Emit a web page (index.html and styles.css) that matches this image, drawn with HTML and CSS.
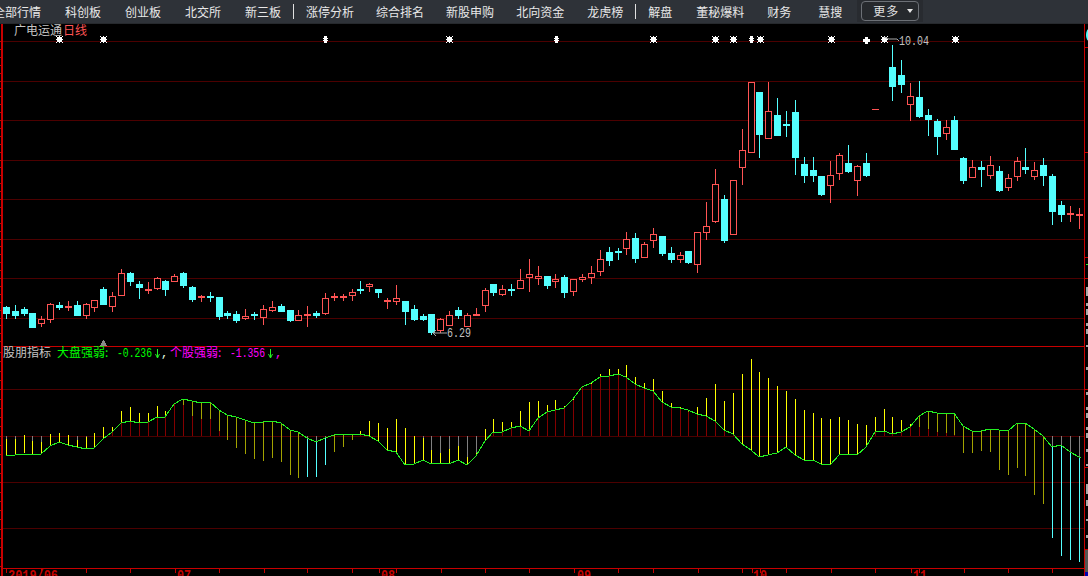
FILE: index.html
```html
<!DOCTYPE html>
<html lang="zh-CN">
<head>
<meta charset="utf-8">
<title>广电运通 日线</title>
<link rel="stylesheet" href="styles.css">
</head>
<body>
<nav class="nav">
  <div class="tabs">
    <span class="tab first">全部行情</span>
    <span class="tab">科创板</span>
    <span class="tab">创业板</span>
    <span class="tab">北交所</span>
    <span class="tab">新三板</span>
    <span class="sep"></span>
    <span class="tab">涨停分析</span>
    <span class="tab tight">综合排名</span>
    <span class="tab tight">新股申购</span>
    <span class="tab tight">北向资金</span>
    <span class="tab tight1">龙虎榜</span>
    <span class="sep"></span>
    <span class="tab">解盘</span>
    <span class="tab">董秘爆料</span>
    <span class="tab tight1">财务</span>
    <span class="tab loose">慧搜</span>
  </div>
  <div class="more-wrap"><button class="more">更多<span class="caret"></span></button></div>
</nav>
<main class="chart-wrap">
  <svg id="chart" class="chart" viewBox="0 24 1088 552" width="1088" height="552" xmlns="http://www.w3.org/2000/svg">
    <g id="axes"></g>
    <g id="price"></g>
    <g id="marks"></g>
    <g id="ind"></g>
    <polyline id="curve" class="curve" points=""></polyline>
    <text class="t-title" x="14" y="35">广电运通</text>
    <text class="t-red" x="63" y="35">日线</text>
    <path class="leader" d="M884 37L889 39H897L899 41M433 333L436 330M433 333L436 336M433 333H447"></path>
    <text class="t-num" x="899" y="45" textLength="30" lengthAdjust="spacingAndGlyphs">10.04</text>
    <text class="t-num" x="447" y="337" textLength="24" lengthAdjust="spacingAndGlyphs">6.29</text>
    <path class="tri" d="M103 340h1v1h1v2h1v2h1v1h-7v-1h1v-2h1v-2h1z"></path>
    <text class="t-title" x="3" y="357">股朋指标</text>
    <text class="t-green" x="57" y="357">大盘强弱:</text>
    <text class="t-green t-val" x="117" y="357" textLength="35" lengthAdjust="spacingAndGlyphs">-0.236</text>
    <path class="arrow" d="M157.5 349V358M155.5 354L157.5 358L159.5 354"></path>
    <text class="t-white t-val" x="161" y="357">,</text>
    <text class="t-mag" x="170" y="357">个股强弱:</text>
    <text class="t-mag t-val" x="230" y="357" textLength="35" lengthAdjust="spacingAndGlyphs">-1.356</text>
    <path class="arrow" d="M270.5 349V358M268.5 354L270.5 358L272.5 354"></path>
    <text class="t-mag t-val" x="275" y="357">,</text>
    <text class="t-date" x="8" y="580" textLength="50" lengthAdjust="spacingAndGlyphs">2019/06</text>
    <text class="t-date" x="177" y="580" textLength="14" lengthAdjust="spacingAndGlyphs">07</text>
    <text class="t-date" x="381" y="580" textLength="14" lengthAdjust="spacingAndGlyphs">08</text>
    <text class="t-date" x="577" y="580" textLength="14" lengthAdjust="spacingAndGlyphs">09</text>
    <text class="t-date" x="753" y="580" textLength="14" lengthAdjust="spacingAndGlyphs">10</text>
    <text class="t-date" x="913" y="580" textLength="14" lengthAdjust="spacingAndGlyphs">11</text>
  </svg>
</main>
<script src="chart.js"></script>
</body>
</html>
```
FILE: styles.css
```css
html, body {
  margin: 0;
  padding: 0;
  height: 100%;
  background: #000;
  overflow: hidden;
}
.nav {
  height: 24px;
  box-sizing: border-box;
  border-bottom: 1px solid #26292d;
  background: #2e3238;
  display: flex;
  align-items: stretch;
  overflow: hidden;
  font: 12px/23px "Noto Sans CJK SC", "Liberation Sans", sans-serif;
  color: #e8e8e8;
}
.tabs {
  display: flex;
  gap: 24px;
  margin-left: -7px;
}
.tab { white-space: nowrap; }
.tab.tight { margin-left: -2px; }
.tab.tight1 { margin-left: -1px; }
.tab.loose { margin-left: 3px; }
.sep {
  width: 1px;
  margin: 4px -12px 4px -12px;
  background: #e0e0e0;
}
.more-wrap {
  margin-left: 15px;
  padding: 1px 4px;
  height: 22px;
  box-sizing: border-box;
  background: #282b30;
}
.more {
  display: flex;
  align-items: center;
  box-sizing: border-box;
  width: 58px;
  height: 20px;
  padding: 0 0 0 11px;
  border: 1px solid #6c7076;
  border-radius: 4px;
  background: #26292d;
  color: #e0e0e0;
  font: 12px/18px "Noto Sans CJK SC", "Liberation Sans", sans-serif;
  letter-spacing: 1px;
}
.caret {
  margin-left: 8px;
  border-left: 3px solid transparent;
  border-right: 3px solid transparent;
  border-top: 4px solid #e8e8e8;
}
.chart-wrap { height: 552px; }
.chart { display: block; }
.chart rect, .curve, .leader, .tri, .arrow { shape-rendering: crispEdges; }
.curve { fill: none; stroke: #22f022; stroke-width: 1; }
.leader { fill: none; stroke: #a8a8a8; stroke-width: 1; shape-rendering: auto; }
.tri { fill: #8a8a8a; }
.arrow { fill: none; stroke: #22f022; stroke-width: 1; shape-rendering: auto; }
.t-title, .t-red, .t-green, .t-mag, .t-white { font: 12px "Noto Sans CJK SC", "Liberation Sans", sans-serif; }
.t-title { fill: #c4c4c4; }
.t-red { fill: #ff5454; }
.t-green { fill: #00ff00; }
.t-mag { fill: #ff00ff; }
.t-white { fill: #e0ffe0; }
.t-val { font: 12px "Liberation Mono", monospace; }
.t-num { font: 13px "Liberation Mono", monospace; fill: #c0c0c0; }
.t-date { font: bold 14px "Liberation Mono", monospace; fill: #c40000; }
.fill-grid { fill: #4c0000; }
.fill-axis { fill: #c80000; }
.fill-cy { fill: #54ffff; }
.fill-rd { fill: #ff5454; }
.fill-w { fill: #fff; }
.fill-frag { fill: #a8a8a8; }
.fill-y { fill: #ffff00; }
.fill-g { fill: #808080; }
.fill-r { fill: #840000; }
.fill-o { fill: #a3a300; }
.fill-c { fill: #54ffff; }
.fill-lime { fill: #22f022; }
.fill-dk { fill: #555; }
.fill-bl { fill: #0000b0; }
.hollow { fill: #000; stroke: #ff5454; stroke-width: 1; }
```
FILE: chart.js
```js
// body top, body bottom, high, low, colour (1 red, 0 cyan); null = no bar
var K = [
[307,314,306,319,0],[311,316,305,319,0],[309,314,307,316,0],[313,328,313,328,0],[319,324,316,327,1],
[304,320,303,323,1],[305,308,302,310,0],[306,308,301,311,1],[305,316,301,316,0],[304,316,303,319,1],
[300,308,300,312,1],[289,305,287,305,0],[296,307,292,312,1],[273,296,269,296,1],[273,282,272,286,0],
[284,288,281,299,0],[289,290,282,294,1],[278,289,277,290,1],[281,290,280,296,0],[276,282,274,282,1],
[273,286,272,288,0],[287,300,286,302,0],[296,297,295,302,1],[296,297,292,302,0],[297,317,297,320,0],
[313,316,311,319,0],[314,321,311,323,0],[316,319,309,320,1],[314,315,312,320,0],[309,318,305,325,1],
[307,311,301,312,1],[306,312,304,312,0],[310,321,310,322,0],[315,321,310,321,1],[314,315,306,327,1],
[313,316,311,318,0],[298,314,293,315,1],[296,297,293,301,1],[296,297,294,301,1],[292,296,289,301,1],
[289,291,281,294,0],[284,287,283,292,1],[289,293,289,298,0],[300,301,298,309,1],[298,302,285,305,1],
[301,312,301,325,0],[309,320,305,321,0],[316,320,314,321,0],[314,333,314,335,0],[319,331,318,333,1],
[315,326,311,326,1],[310,316,307,319,0],[315,327,313,327,1],[314,316,308,316,1],[290,306,288,312,1],
[284,293,284,296,0],[289,295,285,296,1],[289,291,284,296,0],[280,289,269,289,1],[274,278,259,292,1],
[276,279,266,285,1],[276,286,276,289,0],[279,282,274,288,1],[277,293,275,298,0],[279,292,279,296,1],
[277,280,274,282,1],[273,278,266,284,1],[259,272,250,276,1],[252,261,247,266,0],[251,253,248,260,0],
[239,249,232,255,1],[238,259,233,263,0],[244,258,242,258,1],[234,241,228,248,1],[236,254,236,256,0],
[253,260,247,263,0],[255,260,252,263,1],[251,263,251,264,0],[232,265,232,273,1],[226,233,202,240,1],
[184,222,169,223,1],[199,241,195,243,0],[180,235,180,235,1],[150,168,129,185,1],[82,153,82,153,1],
[92,135,92,158,0],[111,139,82,139,1],[115,136,98,136,0],[124,125,111,137,0],[112,158,100,175,0],
[164,176,157,183,0],[170,176,157,182,0],[176,195,176,196,0],[175,186,161,203,1],[155,174,153,180,1],
[163,172,145,173,0],[166,181,165,196,1],[163,176,153,177,0],[109,110,109,110,1],null,
[67,87,45,101,0],[75,85,60,93,0],[96,105,83,121,1],[97,117,81,118,0],[115,120,109,136,0],
[121,137,119,155,0],[127,134,120,140,1],[120,150,116,150,0],[158,181,157,184,0],[167,178,160,178,1],
[167,170,161,187,0],[165,176,156,179,1],[171,191,166,192,0],[178,188,174,191,1],[161,177,157,181,1],
[167,170,148,174,0],[170,177,162,180,1],[165,176,158,186,0],[176,212,174,225,0],[205,215,201,222,0],
[213,215,206,222,1],[214,215,208,229,1]
];
// green line, one value per bar
var L = [455,455,454,455,454,446,442,445,447,449,448,439,432,423,421,423,422,417,417,404,
399,401,403,402,410,415,417,420,423,422,421,423,430,432,438,442,438,435,434,434,
434,436,441,450,452,465,464,460,464,463,464,460,465,456,441,432,432,428,426,431,
418,412,410,408,399,387,383,377,376,374,377,384,388,391,402,407,408,410,414,416,
421,430,434,444,450,457,455,453,447,455,460,460,464,465,455,454,455,447,432,431,
434,432,427,416,411,413,414,413,426,431,431,429,430,431,423,423,429,436,447,445,452,457];
// indicator bars: y, colour, y, colour, y ... (g grey, y yellow, r dark red, o olive, c cyan)
var B = ["436g439y455","436g439y455","435y453","436g441y455","436g442y454","434y446","433y442","435y445","436g440y447","436g437y449",
"433y448","427y439","427y432r436","411y423r436","407y421r436","413y423r436","413y422r436","406y417r436","411y417r436","404r436",
"399o405r436","401o416r436","403o419r436","402o419r436","410o431r436","415o440","417o448","420o454","423o459","422o461",
"421o458","423o462","430o475","432o478","436g438c477","436g442c477","436g438c465","435o452","434o447","434o440",
"431y434r436","421y436","423y441","428y450","419y452","428y465","436y464","436g438y460","436g450y464","436g453y463",
"436g449y464","436g446y460","436g457y465","436g453y456","429y441","419y432r436","422y432r436","422y428r436","411y426r436","402y431r436",
"401y418r436","405y412r436","400y410r436","406y408r436","397y400r436","387r436","382y384r436","374y377r436","369y376r436","369y374r436",
"365y377r436","377y384r436","383y388r436","379y391r436","391y402r436","403y407r436","407y408r436","410o412r436","407y414r436","398y416r436",
"384y421r436","401y430r436","393y434r436","374y444","359y450","372y457","378y455","386y453","391y447","399y455",
"410y460","413y460","418y464","419y465","417y455","420y454","424y455","425y447","417y432r436","409y431r436",
"417y434r436","420y432r436","424y427r436","416o427r436","411o429r436","413o432r436","414o433r436","413o435r436","426o453","431o453",
"431o451","429o452","430o470","431o475","423o468","423o476","429o495","436o504","436g447c538","436g445c556","436g452c560","436g457c562"];

function xOf(i) { return Math.floor(6.3 + i * 8.866); }
function rect(x, y, w, h, cls) {
  return '<rect x="' + x + '" y="' + y + '" width="' + w + '" height="' + h + '" class="' + cls + '"/>';
}

// axes and grid
var a = "";
[41, 81, 120, 160, 199, 239, 278, 318, 389, 436, 482, 528].forEach(function (y) { a += rect(3, y, 1081, 1, "fill-grid"); });
a += rect(1, 24, 2, 552, "fill-axis") + rect(1084, 24, 1, 552, "fill-axis");
a += rect(3, 346, 1081, 1, "fill-axis") + rect(3, 568, 1081, 1, "fill-axis");
for (var t = 0; t < 39; t++) { a += rect(0, Math.round(41 + t * 7.9), 2, 1, "fill-axis"); }
for (t = 0; t < 24; t++) { a += rect(0, Math.round(352 + t * 9.3), 2, 1, "fill-axis"); }
[6, 41, 86, 130, 175, 219, 264, 307, 352, 379, 396, 441, 485, 529, 574, 618, 653, 698, 742, 752, 760, 786, 831, 875, 911, 919, 964, 1008, 1052].forEach(function (x) {
  a += rect(x, 569, 1, 4, "fill-axis");
});
[47, 152, 257, 278, 389, 467, 549].forEach(function (y) { a += rect(1085, y, 3, 1, "fill-axis"); });
a += rect(1086, 264, 2, 1, "fill-lime");
[[287, 9], [303, 3], [309, 6], [323, 3], [329, 5], [345, 2], [367, 3], [392, 3], [407, 3], [413, 5], [427, 3], [433, 5], [449, 3], [464, 2], [484, 10], [500, 6], [519, 2], [535, 3]].forEach(function (f) {
  a += rect(1086, f[0], 2, f[1], "fill-frag");
});
a += rect(1085, 550, 3, 22, "fill-dk") + rect(1085, 572, 3, 4, "fill-bl");
a += '<ellipse cx="1089" cy="35" rx="3" ry="6" class="fill-cy"/>';
document.getElementById("axes").innerHTML = a;

// candlesticks
var p = "";
K.forEach(function (k, i) {
  if (!k) return;
  var x = xOf(i), red = k[4] === 1, flat = k[1] - k[0] < 3;
  var cls = red ? "fill-rd" : "fill-cy";
  var dash = k[3] - k[2] === 1;
  if (k[3] > k[2] && !dash) p += rect(x, k[2], 1, k[3] - k[2], cls);
  if (flat) p += rect(x - 3, k[0], 7, dash ? 1 : 2, cls);
  else if (red) p += '<rect x="' + (x - 2.5) + '" y="' + (k[0] + 0.5) + '" width="6" height="' + (k[1] - k[0] - 1) + '" class="hollow"/>';
  else p += rect(x - 3, k[0], 7, k[1] - k[0], cls);
});
document.getElementById("price").innerHTML = p;

// star markers
function star(x, y) {
  return rect(x - 2, y - 2, 5, 5, "fill-w") + rect(x, y - 3, 1, 7, "fill-w") + rect(x - 3, y, 7, 1, "fill-w") +
    rect(x - 3, y - 3, 1, 1, "fill-w") + rect(x + 3, y - 3, 1, 1, "fill-w") + rect(x - 3, y + 3, 1, 1, "fill-w") + rect(x + 3, y + 3, 1, 1, "fill-w");
}
function narrow(x, y) {
  return rect(x - 1, y - 3, 3, 7, "fill-w") + rect(x - 2, y - 1, 1, 1, "fill-w") + rect(x + 2, y - 1, 1, 1, "fill-w") + rect(x - 2, y + 1, 1, 1, "fill-w") + rect(x + 2, y + 1, 1, 1, "fill-w");
}
function plus(x, y) { return rect(x - 3, y - 1, 7, 3, "fill-w") + rect(x - 1, y - 3, 3, 7, "fill-w"); }
var m = "";
[59, 103, 449, 653, 715, 733, 760, 831, 884, 955].forEach(function (x) { m += star(x, 39); });
[325, 556, 751].forEach(function (x) { m += narrow(x, 39); });
m += plus(866, 40);
document.getElementById("marks").innerHTML = m;

// indicator bars
var colours = { g: "fill-g", y: "fill-y", r: "fill-r", o: "fill-o", c: "fill-c" };
var d = "";
B.forEach(function (s, i) {
  var parts = s.match(/\d+|[a-z]/g), x = xOf(i);
  for (var j = 1; j + 1 < parts.length; j += 2) {
    var y0 = +parts[j - 1], y1 = +parts[j + 1];
    d += rect(x, y0, 1, Math.max(y1 - y0, 1), colours[parts[j]]);
  }
});
document.getElementById("ind").innerHTML = d;

// indicator curve
var pts = L.map(function (y, i) { return xOf(i) + "," + y; });
pts.push("1081,458");
document.getElementById("curve").setAttribute("points", pts.join(" "));
```
